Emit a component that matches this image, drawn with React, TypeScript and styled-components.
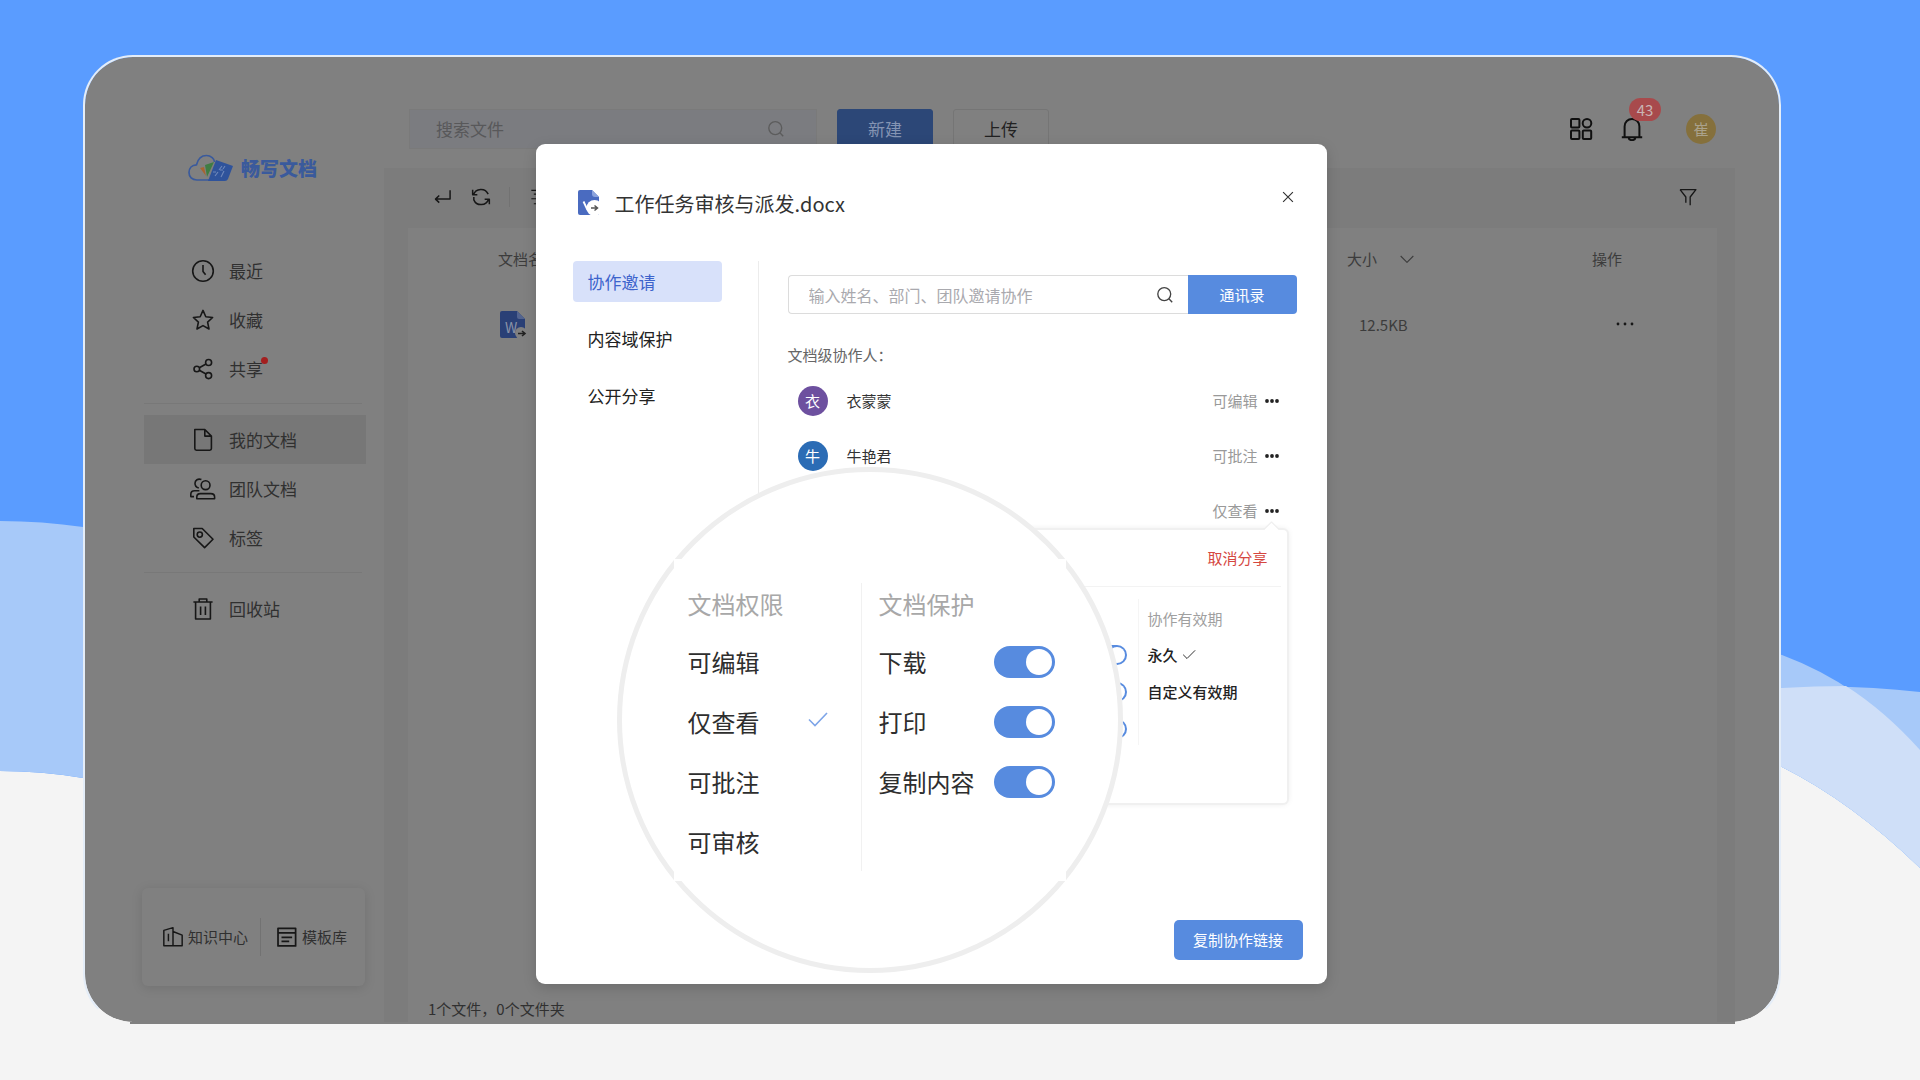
import React from "react";
import styled, { createGlobalStyle, css } from "styled-components";

const GlobalStyle = createGlobalStyle`
  *, *::before, *::after { box-sizing: border-box; }
  body { margin: 0; background: #f4f4f4; }
  body, button, input { font-family: "Noto Sans CJK SC", "Noto Sans", sans-serif; font-size: 15px; line-height: 24px; }
  button { border: 0; padding: 0; background: none; cursor: pointer; color: inherit; }
  a { color: inherit; text-decoration: none; }
  ul { list-style: none; margin: 0; padding: 0; }
  svg { display: block; flex: none; }
`;

const palette = {
  dim: "#808080",
  dimTint: "#7c7c7c",
  dimLine: "#787878",
  ink: "#171717",
  dimText: "#303030",
  blue: "#578bdf",
  line: "#ececec",
};

/* ---------- page and frame ---------- */

const Page = styled.div`
  position: relative;
  min-height: 100vh;
  display: flex;
  flex-direction: column;
  padding: 55px 139px 56px 83px;
  background: #f4f4f4;
  overflow: hidden;
`;

const Waves = styled.svg`
  position: absolute;
  inset: 0;
  width: 100%;
  height: 100%;
`;

const Frame = styled.div`
  position: relative;
  flex: 1;
  display: flex;
  min-height: 969px;
  background: ${palette.dim};
  background-clip: padding-box;
  border: 2px solid #e4edf8;
  border-bottom-color: #f4f4f4;
  border-radius: 50px;
  &::after {
    content: "";
    position: absolute;
    left: 45px;
    right: 44px;
    bottom: -2px;
    height: 2px;
    background: ${palette.dim};
  }
`;

/* ---------- sidebar ---------- */

const Sidebar = styled.aside`
  width: 299px;
  flex: none;
  display: flex;
  flex-direction: column;
`;

const Brand = styled.div`
  display: flex;
  align-items: center;
  gap: 7px;
  height: 28px;
  margin: 97px 0 64px 103px;
  color: #3a5a9c;
  font-size: 19px;
  font-weight: 900;
`;

const Nav = styled.nav`
  padding: 0 18px 0 59px;
`;

const NavDivider = styled.hr`
  height: 1px;
  margin: 10px 4px 11px 0;
  border: 0;
  background: ${palette.dimLine};
`;

const NavLink = styled.a<{ $active?: boolean }>`
  display: flex;
  align-items: center;
  gap: 14px;
  height: 49px;
  padding-left: 47px;
  font-size: 17px;
  color: ${palette.dimText};
  background: ${(p) => (p.$active ? "#777777" : "transparent")};
  svg { color: ${palette.ink}; }
`;

const NavText = styled.span<{ $dot?: boolean }>`
  position: relative;
  ${(p) =>
    p.$dot &&
    css`
      &::after {
        content: "";
        position: absolute;
        top: 0;
        right: -5px;
        width: 7px;
        height: 7px;
        border-radius: 50%;
        background: #a31f1f;
      }
    `}
`;

const QuickCard = styled.div`
  display: flex;
  align-items: center;
  height: 98px;
  margin: auto 19px 36px 57px;
  padding-left: 20px;
  border-radius: 6px;
  background: ${palette.dim};
  box-shadow: 0 2px 12px rgba(0, 0, 0, 0.12);
`;

const QuickLink = styled.a`
  display: flex;
  align-items: center;
  gap: 4px;
  color: ${palette.dimText};
  white-space: nowrap;
  svg { color: ${palette.ink}; }
  & + & {
    margin-left: 12px;
    padding-left: 15px;
    border-left: 1px solid #727272;
    height: 38px;
  }
`;

/* ---------- main area ---------- */

const Main = styled.main`
  flex: 1;
  min-width: 0;
  display: flex;
  flex-direction: column;
`;

const TopBar = styled.header`
  display: flex;
  align-items: center;
  gap: 20px;
  height: 111px;
  padding: 32px 63px 0 25px;
`;

const FileSearch = styled.label`
  display: flex;
  align-items: center;
  width: 408px;
  height: 40px;
  padding: 0 31px 0 26px;
  border: 1px solid #7a7a7a;
  background: #7b7c80;
  color: #5c5c5c;
`;

const PlainInput = styled.input<{ $size: number; $hint: string }>`
  flex: 1;
  min-width: 0;
  padding: 0;
  border: 0;
  outline: 0;
  background: none;
  font-size: ${(p) => p.$size}px;
  &::placeholder { color: ${(p) => p.$hint}; opacity: 1; }
`;

const TopButton = styled.button<{ $primary?: boolean }>`
  width: 96px;
  height: 40px;
  border-radius: 3px;
  font-size: 17px;
  border: 1px solid ${(p) => (p.$primary ? "#2c4777" : "#757575")};
  background: ${(p) => (p.$primary ? "#2c4777" : "transparent")};
  color: ${(p) => (p.$primary ? "#8494b3" : "#222")};
`;

const TopActions = styled.div`
  display: flex;
  align-items: center;
  gap: 27px;
  margin-left: auto;
  color: #101010;
`;

const BellButton = styled.button`
  position: relative;
`;

const Badge = styled.span`
  position: absolute;
  left: 9px;
  top: -19px;
  width: 32px;
  height: 23px;
  border-radius: 12px;
  background: #a84a4c;
  color: #c9b5b5;
  line-height: 23px;
  text-align: center;
`;

const UserAvatar = styled.button`
  width: 30px;
  height: 30px;
  margin-left: 15px;
  border-radius: 50%;
  background: #85703c;
  color: #aaa28c;
`;

const Workspace = styled.section`
  flex: 1;
  display: flex;
  flex-direction: column;
  margin-right: 44px;
  padding: 0 18px 0 24px;
  background: ${palette.dimTint};
`;

const Toolbar = styled.div`
  display: flex;
  align-items: center;
  gap: 18px;
  height: 60px;
  padding: 0 19px 3px 25px;
  color: ${palette.ink};
`;

const ToolDivider = styled.span`
  width: 1px;
  height: 20px;
  background: #727272;
`;

const FilterButton = styled.button`
  margin-left: auto;
`;

const Panel = styled.div`
  flex: 1;
  display: flex;
  flex-direction: column;
  background: ${palette.dim};
`;

const FileTable = styled.table`
  width: 100%;
  table-layout: fixed;
  border-collapse: collapse;
  color: #3c3c3c;
  th, td { padding: 0; text-align: left; font-weight: 400; }
  thead tr { height: 62px; }
  tbody tr { height: 70px; }
  th:first-child { padding-left: 90px; }
  th:nth-child(2) { width: 245px; }
  th:nth-child(3) { width: 125px; }
  td:first-child { padding-left: 91px; }
  td:nth-child(2) { padding-left: 12px; }
  td:nth-child(3) { padding: 0 0 8px 23px; color: ${palette.ink}; }
`;

const SortHead = styled.span`
  display: flex;
  align-items: center;
  gap: 22px;
`;

const PanelFooter = styled.footer`
  margin-top: auto;
  padding-left: 20px;
  line-height: 26px;
  color: ${palette.dimText};
`;

/* ---------- dialog ---------- */

const DialogLayer = styled.div`
  position: absolute;
  inset: 0;
  display: flex;
  justify-content: center;
  align-items: flex-start;
  padding: 87px 2px 0 0;
`;

const Dialog = styled.section`
  position: relative;
  display: flex;
  flex-direction: column;
  width: 791px;
  min-height: 840px;
  border-radius: 9px;
  background: #fff;
  color: #333;
  box-shadow: 0 4px 14px rgba(0, 0, 0, 0.16);
`;

const DialogHeader = styled.header`
  display: flex;
  align-items: flex-start;
  gap: 13px;
  height: 117px;
  padding: 42px 28px 0 40px;
  svg { margin-top: 2px; }
`;

const DialogTitle = styled.h1`
  margin: 0;
  font-size: 20px;
  font-weight: 400;
  line-height: 36px;
`;

const CloseButton = styled.button`
  display: grid;
  place-items: center;
  width: 22px;
  height: 22px;
  margin-left: auto;
  svg { margin: 0; }
`;

const DialogBody = styled.div`
  display: flex;
`;

const Tabs = styled.div`
  display: flex;
  flex-direction: column;
  gap: 16px;
  padding: 0 36px 0 37px;
  border-right: 1px solid ${palette.line};
`;

const Tab = styled.button<{ $active?: boolean }>`
  width: 149px;
  height: 41px;
  padding-left: 15px;
  border-radius: 4px;
  text-align: left;
  font-size: 17px;
  background: ${(p) => (p.$active ? "#d8e1fa" : "transparent")};
  color: ${(p) => (p.$active ? "#3d63cc" : "#222")};
`;

const Pane = styled.div`
  flex: 1;
  padding: 14px 30px 0 29px;
`;

const InviteRow = styled.div`
  display: flex;
  height: 39px;
`;

const InviteBox = styled.label`
  flex: 1;
  display: flex;
  align-items: center;
  padding: 0 14px 0 20px;
  border: 1px solid #dcdcdc;
  border-right: 0;
  border-radius: 4px 0 0 4px;
  color: #444;
`;

const PrimaryButton = styled.button<{ $joined?: boolean }>`
  width: ${(p) => (p.$joined ? 109 : 129)}px;
  height: ${(p) => (p.$joined ? 39 : 40)}px;
  border-radius: ${(p) => (p.$joined ? "0 4px 4px 0" : "5px")};
  background: ${palette.blue};
  color: #fff;
`;

const GroupLabel = styled.p`
  margin: 29px 0 6px;
  color: #666;
`;

const Member = styled.li`
  position: relative;
  display: flex;
  align-items: center;
  height: 55px;
  padding: 0 17px 0 10px;
`;

const MemberAvatar = styled.span<{ $color: string }>`
  width: 30px;
  height: 30px;
  margin-right: 19px;
  border-radius: 50%;
  background: ${(p) => p.$color};
  color: #fff;
  line-height: 30px;
  text-align: center;
`;

const Permission = styled.button`
  display: flex;
  align-items: center;
  gap: 6px;
  margin-left: auto;
  color: #999;
  svg { color: #222; }
`;

const Popover = styled.div`
  position: absolute;
  top: 47px;
  right: 10px;
  width: 527px;
  height: 273px;
  border-radius: 4px;
  background: #fff;
  box-shadow: 0 0 0 2px #f0f0f0, 0 0 7px rgba(0, 0, 0, 0.12);
  &::before {
    content: "";
    position: absolute;
    top: -5px;
    right: 10px;
    width: 11px;
    height: 11px;
    background: #fff;
    transform: rotate(45deg);
    box-shadow: -1px -1px 1px #ececec;
  }
`;

const PopoverHead = styled.div`
  position: relative;
  display: flex;
  justify-content: flex-end;
  align-items: center;
  height: 57px;
  margin: 0 6px;
  padding-right: 13px;
  border-bottom: 1px solid #f3f3f3;
  background: #fff;
  color: #d5473f;
`;

const PopoverBody = styled.div`
  display: flex;
  justify-content: flex-end;
  gap: 11px;
  padding-top: 12px;
`;

const SmallSwitches = styled.div`
  display: flex;
  flex-direction: column;
  gap: 17px;
  padding-top: 46px;
`;

const ValidityColumn = styled.div`
  width: 149px;
  height: 146px;
  padding: 3px 0 0 9px;
  border-left: 1px solid #f5f5f5;
`;

const ValidityTitle = styled.div`
  height: 34px;
  line-height: 34px;
  color: #a0a0a0;
`;

const ValidityOption = styled.button`
  display: flex;
  align-items: center;
  gap: 4px;
  height: 37px;
  color: #222;
  font-weight: 500;
`;

const Switch = styled.input.attrs({ type: "checkbox", role: "switch" })<{ $large?: boolean }>`
  appearance: none;
  display: flex;
  justify-content: flex-end;
  flex: none;
  width: ${(p) => (p.$large ? 61 : 37)}px;
  height: ${(p) => (p.$large ? 32 : 20)}px;
  margin: 0;
  padding: ${(p) => (p.$large ? 3 : 2)}px;
  border-radius: 16px;
  background: ${palette.blue};
  &::before {
    content: "";
    height: 100%;
    aspect-ratio: 1;
    border-radius: 50%;
    background: #fff;
  }
`;

const Lens = styled.div`
  position: absolute;
  left: 81px;
  top: 323px;
  display: flex;
  justify-content: center;
  align-items: center;
  width: 506px;
  height: 506px;
  border: 5px solid #eeeeee;
  border-radius: 50%;
  background: #fff;
`;

const LensPanel = styled.div`
  flex: none;
  display: flex;
  width: 392px;
  height: 322px;
  padding: 24px 11px 10px 14px;
  background: #fff;
  font-size: 24px;
`;

const LensColumn = styled.div`
  width: 173px;
  & + & {
    width: 194px;
    padding-left: 17px;
    border-left: 1px solid #f1f1f1;
  }
`;

const LensTitle = styled.div`
  height: 49px;
  line-height: 42px;
  color: #a8a8a8;
`;

const lensRow = css`
  display: flex;
  align-items: center;
  justify-content: space-between;
  width: 100%;
  height: 60px;
  font-size: 24px;
  line-height: 36px;
  color: #2e2e2e;
`;

const LensOption = styled.button`
  ${lensRow}
  padding-right: 33px;
`;

const LensSetting = styled.label`
  ${lensRow}
`;

const DialogFooter = styled.footer`
  display: flex;
  justify-content: flex-end;
  margin-top: auto;
  padding: 0 24px 24px;
`;

/* ---------- drawings ---------- */

type IconProps = { size?: number; width?: number; children: React.ReactNode };
const Icon = ({ size = 24, width = 1.6, children }: IconProps) => (
  <svg width={size} height={size} viewBox="0 0 24 24" fill="none" stroke="currentColor" strokeWidth={width} strokeLinejoin="round" aria-hidden="true">
    {children}
  </svg>
);

const ClockIcon = () => <Icon><circle cx="12" cy="12" r="10.3" /><path d="M12 6V12.5L14.6 15.8" /></Icon>;
const StarIcon = () => <Icon><path d="M12 2.4 14.8 8.7 21.6 9.5 16.6 14.1 18 21 12 17.6 6 21 7.4 14.1 2.4 9.5 9.2 8.7Z" /></Icon>;
const ShareIcon = () => (
  <Icon><circle cx="5.8" cy="12" r="2.8" /><circle cx="17.6" cy="5.5" r="3" /><circle cx="17.6" cy="18.6" r="3" /><path d="M8.3 10.7 15 7M8.3 13.3 15 17" /></Icon>
);
const PageIcon = () => <Icon><path d="M3.8 1.5H13.8L20.4 8.1V20.6Q20.4 22.2 18.8 22.2H5.4Q3.8 22.2 3.8 20.600ZM13.8 1.5V8.1H20.4" /></Icon>;
const TeamIcon = () => (
  <svg width="24" height="24" viewBox="1 0 24 24" overflow="visible" fill="none" stroke="currentColor" strokeWidth="1.6" strokeLinejoin="round" aria-hidden="true">
    <circle cx="15.600" cy="8.200" r="4.400" />
    <path d="M6.800 21.800V20Q6.800 16.600 10.400 16.600H20.800Q24.600 16.600 24.600 20V21.800Z" />
    <path d="M11.400 2.600C8 1.200 5 3.300 5 6.200 5 8.600 6.400 10.400 8.800 11M9.400 13.800H4.600Q.8 13.800 .8 17.400V19.600H4" />
  </svg>
);
const TagIcon = () => <Icon><path d="M2.8 2.5H11.2L22 13.2 13.6 21.6 2.8 11Z" /><circle cx="8.8" cy="8.6" r="2.6" /></Icon>;
const TrashIcon = () => <Icon><path d="M2.4 5H21.6M8.2 5V2H15.8V5M4.6 5V22H19.4V5M9.6 9.4V18M14.4 9.4V18" /></Icon>;
const BookIcon = () => <Icon size={22}><path d="M2 4.8 12 1.8V21.5H2ZM12 6 22 10V21.5H12M7 8.5V16.5" /></Icon>;
const TemplateIcon = () => <Icon size={22} width={1.9}><path d="M2.2 2.5H21.4V21.8H2.2ZM2.2 7.6H21.4M6 12.4H17.6M6 16.8H14.4" /></Icon>;
const SearchIcon = () => <Icon size={18} width={1.8}><circle cx="11" cy="10.8" r="8.6" /><path d="M17.2 17 21.6 21.6" /></Icon>;
const GridIcon = () => (
  <Icon size={24} width={2}><rect x="2" y="2" width="8.4" height="8.4" rx="1" /><circle cx="18" cy="6.2" r="4.3" /><rect x="2" y="13.6" width="8.4" height="8.4" rx="1" /><rect x="13.8" y="13.6" width="8.4" height="8.4" rx="1" /></Icon>
);
const BellIcon = () => <Icon size={24} width={2}><path d="M1.8 20.2H22.2M4.6 20V9.6C4.6 5 8 2 12 2S19.4 5 19.4 9.6V20M8.6 20.6C8.9 24 15.1 24 15.4 20.6" /></Icon>;
const ReturnIcon = () => <Icon size={20} width={1.8}><path d="M20.5 4V14.5H3M7.5 10.2 3 14.5 7.5 18.8" /></Icon>;
const RefreshIcon = () => (
  <Icon size={20} width={1.8}><path d="M3 9.4A9.4 9.4 0 0 1 20.6 8.6M2 3.4V9.4H7.6M21 14.6A9.4 9.4 0 0 1 3.4 15.4V12M22 20.6V14.6H16.4" /></Icon>
);
const ListIcon = () => <Icon size={20} width={1.3}><path d="M4 4H21M7 8.500H21M4 14H21M7 20H21" /></Icon>;
const FilterIcon = () => <Icon size={20} width={1.6}><path d="M2.5 3.2H21.5L14.6 12V21.8M2.5 3.2 9.4 12V19" /></Icon>;
const ChevronIcon = () => <Icon size={16} width={1.6}><path d="M2.5 7.5 12 17 21.5 7.5" /></Icon>;
const CloseIcon = () => <Icon size={14} width={2}><path d="M3.6 3.6 20.4 20.4M20.4 3.6 3.6 20.4" /></Icon>;
const CheckIcon = () => <Icon size={14} width={1.6}><path d="M2 11.5 8.6 18 22.500 4" /></Icon>;

const LensCheck = () => (
  <svg width="20" height="24" viewBox="0 0 20 24" fill="none" stroke="#7ea5e8" strokeWidth="1.6" aria-hidden="true">
    <path d="M1 9.5 7 15.5 19 3" />
  </svg>
);

const Dots = ({ wide }: { wide?: boolean }) => (
  <svg width={wide ? 20 : 16} height="6" viewBox={wide ? "0 0 20 6" : "0 0 16 6"} fill="currentColor" aria-hidden="true">
    {(wide ? [3, 10, 17] : [3, 8, 13]).map((x) => <circle key={x} cx={x} cy="3" r={wide ? 1.4 : 1.9} />)}
  </svg>
);

const FileIcon = () => (
  <svg width="28" height="30" viewBox="0 0 28 30" aria-hidden="true">
    <path d="M3 1H18L26 9V28H3Q1 28 1 26V3Q1 1 3 1Z" fill="#2a4076" />
    <path d="M18 1V7Q18 9 20 9H26Z" fill="#53648f" />
    <text x="6" y="23" fontSize="14" fontFamily="Noto Sans CJK SC, sans-serif" fill="#8b93a8">W</text>
    <circle cx="22" cy="23" r="6" fill={palette.dim} />
    <path d="M19 23.500H25M23 21 26 23.500 23 26" fill="none" stroke="#222" strokeWidth="1.6" />
  </svg>
);

const DialogFileIcon = () => (
  <svg width="26" height="28" viewBox="0 0 26 28" aria-hidden="true">
    <path d="M4 2H16L23 9V27H4Q2 27 2 25V4Q2 2 4 2Z" fill="#4a6bc0" />
    <path d="M16 2V6Q16 9 19 9H23Z" fill="#8ba3dd" />
    <path d="M7.500 13.500 11.500 22" stroke="#fff" strokeWidth="1.800" />
    <circle cx="18.500" cy="20" r="8" fill="#fff" />
    <path d="M15 20H21M18.500 17.500 21.500 20 18.500 22.500" fill="none" stroke="#555" strokeWidth="1.500" />
  </svg>
);

const BrandMark = () => (
  <svg width="46" height="28" viewBox="0 0 46 28" aria-hidden="true">
    <path d="M22 26H9C4 26 1 23 1 18.500 1 14 4 11 8.500 10.800 10 4.500 14 1.500 18.500 1.500 23 1.500 26.500 5 26.500 8" fill="none" stroke="#3a5a9c" strokeWidth="1.700" />
    <path d="M12 14 16 13 18 22Z" fill="#a8642f" />
    <path d="M17 11 26 8 19 23Z" fill="#3f7d43" />
    <path d="M28 6 45 12 40 25Q39 27 37 27H20Z" fill="#2f539b" />
    <path d="M34 12 31 16M30 18 27 22M36 17 33 23M37 12 35 15M25 18H28M32 16H35" stroke="#6f88ba" strokeWidth="1.100" />
  </svg>
);

const Background = () => (
  <Waves viewBox="0 0 1920 1080" preserveAspectRatio="none" aria-hidden="true">
    <path d="M0 0H1920V868Q1852 802 1782 767L960 560V1000H300L83 778Q42 771 0 771Z" fill="#5a9cff" />
    <path d="M0 521Q42 521 83 527L300 600V900L83 778Q42 771 0 771Z" fill="#a7c9f9" />
    <path d="M1500 600 1782 655Q1860 684 1920 750V868Q1852 802 1782 767L1500 700Z" fill="#a7c9f9" />
    <path d="M1700 688H1782Q1850 684 1920 692V868Q1852 802 1782 767Z" fill="#a7c9f9" />
    <path d="M1700 688H1782Q1815 686 1846 686 1885 711 1920 750V868Q1852 802 1782 767L1700 740Z" fill="#cfdff8" />
  </Waves>
);

/* ---------- data ---------- */

type NavItem = { text: string; icon: React.ReactNode; dot?: boolean; active?: boolean };

const navGroups: NavItem[][] = [
  [
    { text: "最近", icon: <ClockIcon /> },
    { text: "收藏", icon: <StarIcon /> },
    { text: "共享", icon: <ShareIcon />, dot: true },
  ],
  [
    { text: "我的文档", icon: <PageIcon />, active: true },
    { text: "团队文档", icon: <TeamIcon /> },
    { text: "标签", icon: <TagIcon /> },
  ],
  [{ text: "回收站", icon: <TrashIcon /> }],
];

const members = [
  { name: "衣蒙蒙", initial: "衣", color: "#6d509f", permission: "可编辑" },
  { name: "牛艳君", initial: "牛", color: "#2b6cb5", permission: "可批注" },
];

const permissions = ["可编辑", "仅查看", "可批注", "可审核"];
const protections = ["下载", "打印", "复制内容"];

/* ---------- app ---------- */

const SharePopover = () => (
  <Popover>
    <PopoverHead><button type="button">取消分享</button></PopoverHead>
    <PopoverBody>
      <SmallSwitches>
        {protections.map((p) => <Switch key={p} aria-label={p} defaultChecked />)}
      </SmallSwitches>
      <ValidityColumn>
        <ValidityTitle>协作有效期</ValidityTitle>
        <ValidityOption type="button">永久<CheckIcon /></ValidityOption>
        <ValidityOption type="button">自定义有效期</ValidityOption>
      </ValidityColumn>
    </PopoverBody>
  </Popover>
);

const PermissionLens = () => (
  <Lens>
    <LensPanel>
      <LensColumn>
        <LensTitle>文档权限</LensTitle>
        {permissions.map((p) => (
          <LensOption key={p} type="button">{p}{p === "仅查看" && <LensCheck />}</LensOption>
        ))}
      </LensColumn>
      <LensColumn>
        <LensTitle>文档保护</LensTitle>
        {protections.map((p) => (
          <LensSetting key={p}>{p}<Switch $large defaultChecked /></LensSetting>
        ))}
      </LensColumn>
    </LensPanel>
  </Lens>
);

export default function App() {
  return (
    <Page>
      <GlobalStyle />
      <Background />
      <Frame>
        <Sidebar>
          <Brand><BrandMark />畅写文档</Brand>
          <Nav>
            {navGroups.map((group, i) => (
              <React.Fragment key={i}>
                {i > 0 && <NavDivider />}
                <ul>
                  {group.map((item) => (
                    <li key={item.text}>
                      <NavLink href="#" $active={item.active}>
                        {item.icon}
                        <NavText $dot={item.dot}>{item.text}</NavText>
                      </NavLink>
                    </li>
                  ))}
                </ul>
              </React.Fragment>
            ))}
          </Nav>
          <QuickCard>
            <QuickLink href="#"><BookIcon />知识中心</QuickLink>
            <QuickLink href="#"><TemplateIcon />模板库</QuickLink>
          </QuickCard>
        </Sidebar>

        <Main>
          <TopBar>
            <FileSearch>
              <PlainInput $size={17} $hint="#58585a" placeholder="搜索文件" aria-label="搜索文件" />
              <SearchIcon />
            </FileSearch>
            <TopButton type="button" $primary>新建</TopButton>
            <TopButton type="button">上传</TopButton>
            <TopActions>
              <button type="button" aria-label="应用"><GridIcon /></button>
              <BellButton type="button" aria-label="通知"><BellIcon /><Badge>43</Badge></BellButton>
              <UserAvatar type="button">崔</UserAvatar>
            </TopActions>
          </TopBar>
          <Workspace>
            <Toolbar>
              <button type="button" aria-label="返回"><ReturnIcon /></button>
              <button type="button" aria-label="刷新"><RefreshIcon /></button>
              <ToolDivider />
              <button type="button" aria-label="列表"><ListIcon /></button>
              <FilterButton type="button" aria-label="筛选"><FilterIcon /></FilterButton>
            </Toolbar>
            <Panel>
              <FileTable>
                <thead>
                  <tr><th>文档名</th><th><SortHead>大小<ChevronIcon /></SortHead></th><th>操作</th></tr>
                </thead>
                <tbody>
                  <tr>
                    <td><FileIcon /></td>
                    <td>12.5KB</td>
                    <td><button type="button" aria-label="更多"><Dots wide /></button></td>
                  </tr>
                </tbody>
              </FileTable>
              <PanelFooter>1个文件，0个文件夹</PanelFooter>
            </Panel>
          </Workspace>
        </Main>

        <DialogLayer>
          <Dialog role="dialog" aria-labelledby="dialog-title">
            <DialogHeader>
              <DialogFileIcon />
              <DialogTitle id="dialog-title">工作任务审核与派发.docx</DialogTitle>
              <CloseButton type="button" aria-label="关闭"><CloseIcon /></CloseButton>
            </DialogHeader>
            <DialogBody>
              <Tabs role="tablist">
                <Tab type="button" role="tab" aria-selected $active>协作邀请</Tab>
                <Tab type="button" role="tab">内容域保护</Tab>
                <Tab type="button" role="tab">公开分享</Tab>
              </Tabs>
              <Pane>
                <InviteRow>
                  <InviteBox>
                    <PlainInput $size={16} $hint="#a9a9ae" placeholder="输入姓名、部门、团队邀请协作" aria-label="邀请协作" />
                    <SearchIcon />
                  </InviteBox>
                  <PrimaryButton type="button" $joined>通讯录</PrimaryButton>
                </InviteRow>
                <GroupLabel>文档级协作人：</GroupLabel>
                <ul>
                  {members.map((m) => (
                    <Member key={m.name}>
                      <MemberAvatar $color={m.color}>{m.initial}</MemberAvatar>
                      {m.name}
                      <Permission type="button">{m.permission}<Dots /></Permission>
                    </Member>
                  ))}
                  <Member>
                    <Permission type="button">仅查看<Dots /></Permission>
                    <SharePopover />
                  </Member>
                </ul>
              </Pane>
            </DialogBody>
            <DialogFooter>
              <PrimaryButton type="button">复制协作链接</PrimaryButton>
            </DialogFooter>
            <PermissionLens />
          </Dialog>
        </DialogLayer>
      </Frame>
    </Page>
  );
}
